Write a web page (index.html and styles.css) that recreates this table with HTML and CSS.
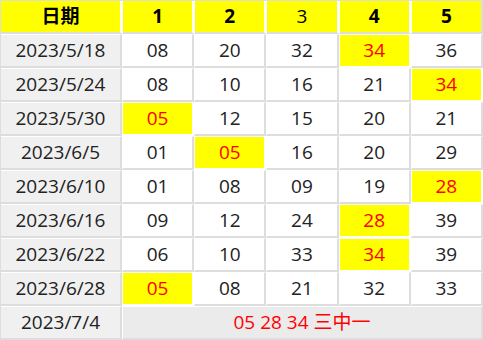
FILE: index.html
```html
<!DOCTYPE html>
<html>
<head>
<meta charset="utf-8">
<link rel="stylesheet" href="styles.css">
</head>
<body>
<table class="grid">
  <thead>
    <tr>
      <th class="date-col">日期</th>
      <th>1</th>
      <th>2</th>
      <th class="thin">3</th>
      <th>4</th>
      <th>5</th>
    </tr>
  </thead>
  <tbody>
    <tr><td class="date">2023/5/18</td><td>08</td><td>20</td><td>32</td><td class="hit">34</td><td>36</td></tr>
    <tr><td class="date">2023/5/24</td><td>08</td><td>10</td><td>16</td><td>21</td><td class="hit">34</td></tr>
    <tr><td class="date">2023/5/30</td><td class="hit">05</td><td>12</td><td>15</td><td>20</td><td>21</td></tr>
    <tr><td class="date">2023/6/5</td><td>01</td><td class="hit">05</td><td>16</td><td>20</td><td>29</td></tr>
    <tr><td class="date">2023/6/10</td><td>01</td><td>08</td><td>09</td><td>19</td><td class="hit">28</td></tr>
    <tr><td class="date">2023/6/16</td><td>09</td><td>12</td><td>24</td><td class="hit">28</td><td>39</td></tr>
    <tr><td class="date">2023/6/22</td><td>06</td><td>10</td><td>33</td><td class="hit">34</td><td>39</td></tr>
    <tr><td class="date">2023/6/28</td><td class="hit">05</td><td>08</td><td>21</td><td>32</td><td>33</td></tr>
    <tr class="last"><td class="date">2023/7/4</td><td class="result" colspan="5">05 28 34 三中一</td></tr>
  </tbody>
</table>
</body>
</html>
```
FILE: styles.css
```css
html, body {
  margin: 0;
  padding: 0;
  background: #fff;
}

.grid {
  width: 483px;
  table-layout: fixed;
  border-collapse: separate;
  border-spacing: 0;
  border-top: 1px solid #dddddd;
  border-left: 1px solid #dddddd;
  font-family: "Open Sans", "Noto Sans CJK SC", sans-serif;
  font-size: 19px;
  color: #222;
}

.grid th,
.grid td {
  box-sizing: border-box;
  padding: 0;
  text-align: center;
  vertical-align: middle;
  border-left: 1px solid #fff;
  border-top: 1px solid #fff;
  border-right: 2px solid #dddddd;
  border-bottom: 2px solid #dddddd;
  line-height: 1;
}

.grid th {
  height: 33px;
  background: #ffff00;
  color: #000;
  font-weight: bold;
  border-top: 0;
  border-right-color: #fff;
}

.grid th:last-child {
  border-right-color: #dddddd;
}

.grid th.thin {
  font-weight: normal;
}

.grid th.date-col {
  width: 121px;
}

.grid th:first-child,
.grid td:first-child {
  border-left: 0;
}

.grid td {
  height: 34px;
}

.grid td.date {
  background: #f0f0f0;
}

.grid td.hit {
  background: #ffff00;
  color: #ff0000;
  border-color: #fff;
}

.grid td.result {
  background: #ebebeb;
  color: #ff0000;
}
```
